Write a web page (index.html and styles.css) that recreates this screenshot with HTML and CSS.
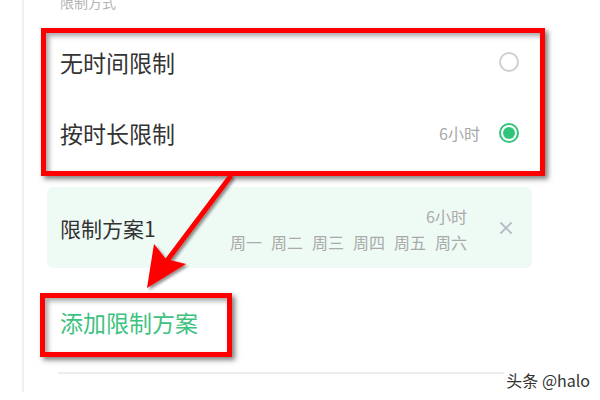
FILE: index.html
```html
<!DOCTYPE html>
<html lang="zh-CN">
<head>
<meta charset="utf-8">
<title>限制方式</title>
<link rel="stylesheet" href="styles.css">
</head>
<body>
<div class="page">
  <div class="panel">
    <div class="section-title">限制方式</div>
    <div class="option">
      <span class="option-label">无时间限制</span>
      <span class="option-right"><span class="radio"></span></span>
    </div>
    <div class="option">
      <span class="option-label">按时长限制</span>
      <span class="option-right"><span class="option-value">6小时</span><span class="radio checked"></span></span>
    </div>
    <div class="plan-card">
      <div class="plan-name">限制方案1</div>
      <div class="plan-info">
        <div class="plan-duration">6小时</div>
        <div class="plan-days"><span>周一</span><span>周二</span><span>周三</span><span>周四</span><span>周五</span><span>周六</span></div>
      </div>
      <svg class="plan-close" width="14" height="14" viewBox="0 0 14 14"><path d="M1.5 1.5 L12.5 12.5 M12.5 1.5 L1.5 12.5" stroke="#b4bcc4" stroke-width="1.8" fill="none"/></svg>
    </div>
    <div class="add-plan">添加限制方案</div>
    <div class="divider"></div>
  </div>

  <div class="mark mark-options"></div>
  <div class="mark mark-add"></div>
  <svg class="arrow" width="600" height="400" viewBox="0 0 600 400">
    <defs>
      <filter id="sh" x="-20%" y="-20%" width="140%" height="140%">
        <feDropShadow dx="2" dy="2" stdDeviation="1.5" flood-color="#000" flood-opacity="0.45"/>
      </filter>
    </defs>
    <g filter="url(#sh)" fill="#ff0000">
      <path d="M230 177 L166 262" stroke="#ff0000" stroke-width="5" stroke-linecap="round" fill="none"/>
      <polygon points="147,288 154,244 166,259 186,264"/>
    </g>
  </svg>
  <div class="watermark">头条 @halo</div>
</div>
</body>
</html>
```

FILE: styles.css
```css
* { box-sizing: border-box; }
html, body { margin: 0; padding: 0; background: #ffffff; }
body {
  font-family: "Noto Sans CJK SC", "Noto Sans", sans-serif;
  color: #333333;
}
.page {
  position: relative;
  width: 600px;
  height: 400px;
  overflow: hidden;
  background: #ffffff;
}
.panel {
  margin-left: 22px;
  height: 400px;
  border-left: 2px solid #f0f0f0;
  padding: 0 81px 0 36px;
}
.section-title {
  margin-top: -8px;
  height: 20px;
  line-height: 20px;
  font-size: 14px;
  color: #b4b4b4;
}
.option {
  display: flex;
  align-items: center;
  justify-content: space-between;
  height: 70px;
}
.section-title + .option { margin-top: 15px; }
.option + .option { margin-top: 1px; }
.option-label {
  font-size: 23px;
  color: #333333;
}
.option-right {
  display: flex;
  align-items: center;
  gap: 19px;
}
.option-value {
  font-size: 16px;
  color: #a8a8a8;
}
.radio {
  width: 20px;
  height: 20px;
  border-radius: 50%;
  border: 2px solid #cfcfcf;
  display: inline-block;
  position: relative;
}
.radio.checked {
  border-color: #33c47c;
}
.radio.checked::after {
  content: "";
  position: absolute;
  left: 2px;
  top: 2px;
  width: 12px;
  height: 12px;
  border-radius: 50%;
  background: #2ec47a;
}
.plan-card {
  margin: 19px -13px 0 -13px;
  height: 81px;
  background: #eefaf4;
  border-radius: 6px;
  display: flex;
  align-items: center;
  padding: 0 19px 0 13px;
}
.plan-name {
  font-size: 21px;
  color: #333333;
  flex: 1;
}
.plan-info {
  display: flex;
  flex-direction: column;
  align-items: flex-end;
  line-height: 26px;
  margin-right: 32px;
  margin-top: 2px;
}
.plan-duration {
  font-size: 16px;
  color: #aaaaaa;
}
.plan-days {
  display: flex;
  gap: 9px;
  font-size: 16px;
  color: #aaaaaa;
}
.plan-close { display: block; }
.add-plan {
  margin-top: 39px;
  height: 30px;
  line-height: 30px;
  font-size: 23px;
  color: #3ec27f;
}
.divider {
  margin: 35px 14px 0 -2px;
  height: 2px;
  background: #ececec;
}
.mark {
  position: absolute;
  border: 5px solid #ff0000;
  box-shadow: 3px 3px 5px rgba(0, 0, 0, 0.5), inset 3px 3px 5px rgba(0, 0, 0, 0.35);
}
.mark-options {
  left: 41px;
  top: 28px;
  width: 504px;
  height: 148px;
}
.mark-add {
  left: 40px;
  top: 293px;
  width: 192px;
  height: 64px;
}
.arrow {
  position: absolute;
  left: 0;
  top: 0;
}
.watermark {
  position: absolute;
  right: 10px;
  top: 369px;
  font-family: "Noto Sans CJK SC", "Liberation Sans", sans-serif;
  font-size: 16px;
  line-height: 22px;
  color: #333333;
  text-shadow: 0 0 2px #ffffff, 0 0 2px #ffffff;
  background: #ffffff;
  padding-left: 2px;
}
```
